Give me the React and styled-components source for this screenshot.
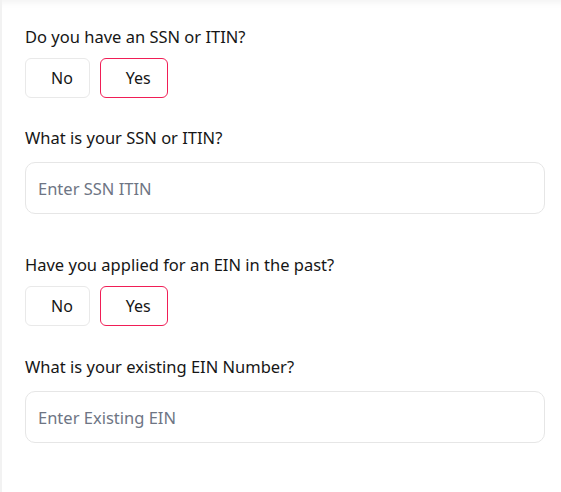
import React from "react";
import styled, { createGlobalStyle } from "styled-components";

const Global = createGlobalStyle`
  html, body { margin: 0; padding: 0; background: #ffffff; }
  body { font-family: "Noto Sans", "Open Sans", sans-serif; color: #161616; }
  * { box-sizing: border-box; }
`;

const Page = styled.div`
  min-height: 492px;
  border-left: 2px solid #f2f2f2;
  padding: 25px 16px 0 23px;
  box-shadow: inset 0 9px 9px -8px rgba(0, 0, 0, 0.07);
`;

const Section = styled.section`
  display: flex;
  flex-direction: column;
  margin-bottom: ${(p) => p.$after}px;
`;

const Label = styled.label`
  font-size: 16.5px;
  line-height: 24px;
  color: #161616;
  margin-bottom: ${(p) => p.$gap}px;
`;

const Choices = styled.div`
  display: flex;
  gap: 10px;
`;

const Choice = styled.button`
  height: 40px;
  padding: 0 16px 0 25px;
  background: #fff;
  border: 1px solid ${(p) => (p.$active ? "#f01e56" : "#e9e9e9")};
  border-radius: 6px;
  font-family: inherit;
  font-size: 16px;
  color: #161616;
  cursor: pointer;
`;

const Input = styled.input`
  width: 100%;
  height: 52px;
  border: 1px solid #e6e6e6;
  border-radius: 10px;
  padding: 0 12px;
  font-family: inherit;
  font-size: 16.5px;
  color: #161616;
  outline: none;
  &::placeholder { color: #6e7584; }
`;

function YesNo({ label, after }) {
  return (
    <Section $after={after}>
      <Label $gap={9}>{label}</Label>
      <Choices>
        <Choice>No</Choice>
        <Choice $active>Yes</Choice>
      </Choices>
    </Section>
  );
}

function TextField({ label, placeholder, after }) {
  return (
    <Section $after={after}>
      <Label $gap={12}>{label}</Label>
      <Input placeholder={placeholder} />
    </Section>
  );
}

export default function App() {
  return (
    <>
      <Global />
      <Page>
        <YesNo label="Do you have an SSN or ITIN?" after={28} />
        <TextField label="What is your SSN or ITIN?" placeholder="Enter SSN ITIN" after={39} />
        <YesNo label="Have you applied for an EIN in the past?" after={29} />
        <TextField label="What is your existing EIN Number?" placeholder="Enter Existing EIN" after={0} />
      </Page>
    </>
  );
}
